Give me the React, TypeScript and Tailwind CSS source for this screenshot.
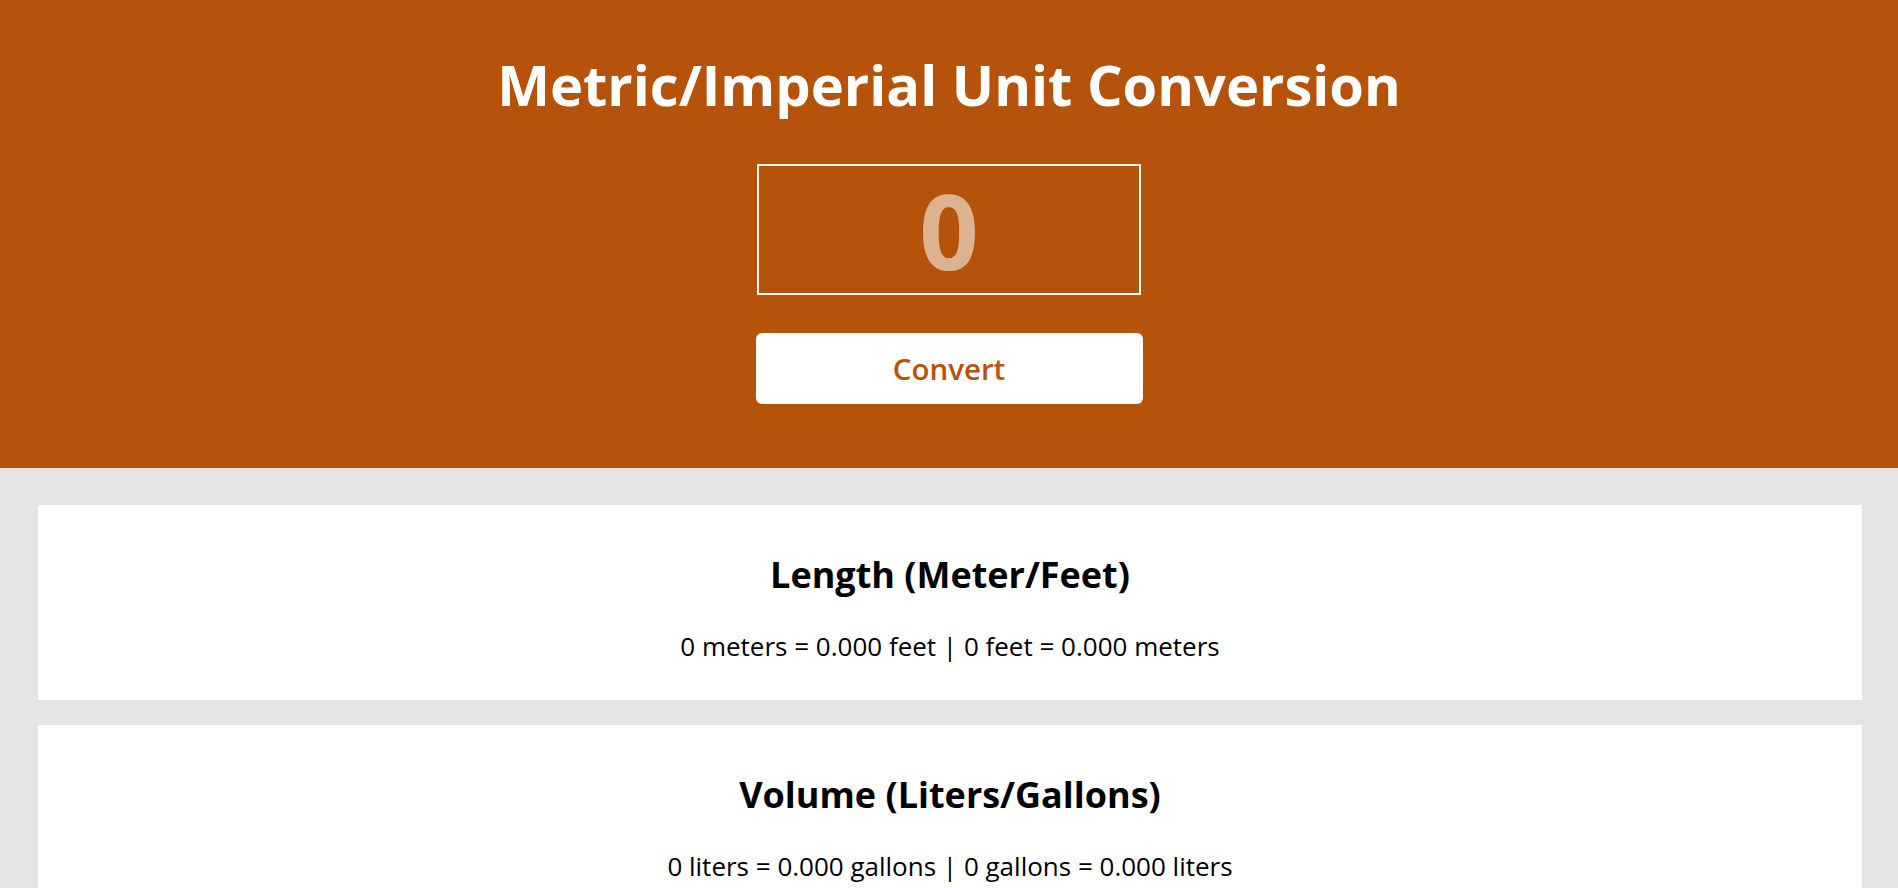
import React from "react";

const cards = [
  { title: "Length (Meter/Feet)", text: "0 meters = 0.000 feet | 0 feet = 0.000 meters" },
  { title: "Volume (Liters/Gallons)", text: "0 liters = 0.000 gallons | 0 gallons = 0.000 liters" },
];

export default function App() {
  return (
    <div className="min-h-screen bg-[#e5e5e5] font-['Open_Sans',_sans-serif]">
      <header className="flex flex-col items-center bg-[#b45309] pt-[51px] pb-[64px]">
        <h1 className="text-[56px] font-bold leading-[67px] text-white">Metric/Imperial Unit Conversion</h1>
        <input
          type="text"
          placeholder="0"
          className="mt-[46px] h-[131px] w-[384px] border-2 border-white bg-transparent text-center text-[104px] font-bold text-white outline-none placeholder:text-white/55"
        />
        <button className="mt-[38px] h-[71px] w-[387px] rounded-[6px] bg-white pt-[2px] text-[29.5px] font-semibold text-[#b45309]">
          Convert
        </button>
      </header>
      <main className="flex flex-col gap-[25px] pl-[38px] pr-[36px] pt-[37px] pb-[37px]">
        {cards.map((c) => (
          <section key={c.title} className="flex flex-col items-center bg-white pt-[47px] pb-[36px]">
            <h2 className="text-[36px] font-bold leading-[46px] text-black">{c.title}</h2>
            <p className="mt-[30px] text-[26px] leading-[36px] text-black">{c.text}</p>
          </section>
        ))}
      </main>
    </div>
  );
}
